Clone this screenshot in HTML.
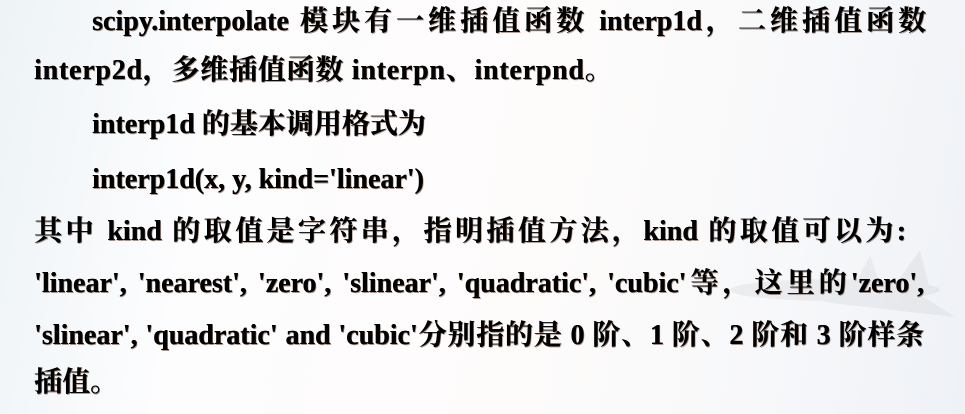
<!DOCTYPE html>
<html><head><meta charset="utf-8"><style>
html,body{margin:0;padding:0}
body{width:965px;height:414px;overflow:hidden;position:relative;
background:linear-gradient(100deg,#edf3f6 0%,#fdfdfe 22%,#fefcfb 55%,#f7f8fa 80%,#eef1f6 100%);
font-family:"Liberation Serif","Noto Serif CJK SC",serif;font-weight:bold;font-size:28px;color:#000;}
.l{position:absolute;white-space:nowrap;line-height:32px;text-shadow:1px 1px 0 rgba(60,20,0,.45),0.4px 0 0 #000}
.j{text-align:justify;text-align-last:justify;white-space:normal}
</style></head><body>
<svg style="position:absolute;left:710px;top:245px" width="250" height="110">
<g fill="#cfd2d6" opacity=".3">
<ellipse cx="125" cy="45" rx="105" ry="11"/>
<polygon points="60,40 195,40 245,72 120,58"/>
<polygon points="185,40 210,5 220,45"/>
<polygon points="145,40 160,10 170,40"/>
</g></svg>
<div class="l" style="left:92px;top:6px;width:834px"><span class="j" style="display:block">scipy.interpolate 模块有一维插值函数 interp1d，二维插值函数</span></div>
<div class="l" style="left:34px;top:55px;letter-spacing:0.75px">interp2d，多维插值函数 interpn、interpnd。</div>
<div class="l" style="left:92px;top:109px">interp1d 的基本调用格式为</div>
<div class="l" style="left:92px;top:164px">interp1d(x, y, kind='linear')</div>
<div class="l" style="left:34px;top:216px;width:872px"><span class="j" style="display:block">其中 kind 的取值是字符串，指明插值方法，kind 的取值可以为:</span></div>
<div class="l" style="left:34px;top:268px;width:890px"><span class="j" style="display:block">'linear', 'nearest', 'zero', 'slinear', 'quadratic', 'cubic'等，这里的'zero',</span></div>
<div class="l" style="left:34px;top:320px;width:890px"><span class="j" style="display:block">'slinear', 'quadratic' and 'cubic'分别指的是 0 阶、1 阶、2 阶和 3 阶样条</span></div>
<div class="l" style="left:34px;top:367px">插值。</div>
</body></html>
